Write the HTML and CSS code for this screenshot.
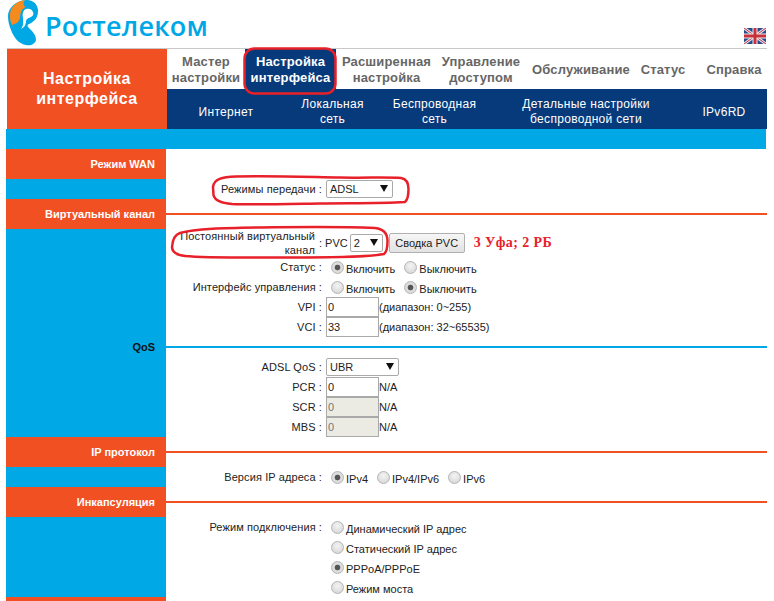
FILE: index.html
```html
<!DOCTYPE html>
<html lang="ru">
<head>
  <meta charset="UTF-8" />
  <title>Настройка интерфейса</title>
  <link rel="stylesheet" href="styles.css">
</head>
<body>
  <header class="top">
    <div class="logo">
      <svg class="logo-mark" width="30" height="46" viewBox="0 0 30 46">
        <path d="M19 0C26 0 30 5 30 11C30 18 26 22 21 24C19 25 19 26 21 28C25 32 28 35 28 40C27 44 23 46 18 45C11 44 6 38 3 30C1 25 0 21 0 16C0 8 8 0 19 0Z" fill="#00a7e5"/>
        <path d="M17 0C8 1 1 8 2 17C2 20 3 23 4 25C8 24 11 22 12 18C12 13 14 8 18 7C15 6 15 2 17 0Z" fill="#f58a1f"/>
        <path d="M25 12C24 9 21 8 18 9C15 10 14 14 15 18C15 22 16 25 13 29C17 27 18 24 18 21C19 18 21 18 23 17C25 16 26 14 25 12Z" fill="#fff"/>
      </svg>
      <span class="logo-text">Ростелеком</span>
    </div>
    <svg class="flag" width="22" height="16" viewBox="0 0 22 16">
      <rect width="22" height="16" fill="#2a4a8c"/>
      <path d="M0 0L22 16M22 0L0 16" stroke="#e4e4ec" stroke-width="3"/>
      <path d="M0 0L22 16M22 0L0 16" stroke="#c8303a" stroke-width="1"/>
      <path d="M11 0V16M0 8H22" stroke="#eeeef2" stroke-width="5"/>
      <path d="M11 0V16M0 8H22" stroke="#c8303a" stroke-width="3"/>
    </svg>
  </header>

  <div class="nav-wrap">
    <div class="page-title">Настройка<br>интерфейса</div>
    <nav class="nav">
      <div class="menu">
        <a class="m1">Мастер<br>настройки</a>
        <a class="m2 active">Настройка<br>интерфейса</a>
        <a class="m3">Расширенная<br>настройка</a>
        <a class="m4">Управление<br>доступом</a>
        <a class="m5">Обслуживание</a>
        <a class="m6">Статус</a>
        <a class="m7">Справка</a>
      </div>
      <div class="submenu">
        <a class="s1">Интернет</a>
        <a class="s2">Локальная<br>сеть</a>
        <a class="s3">Беспроводная<br>сеть</a>
        <a class="s4">Детальные настройки<br>беспроводной сети</a>
        <a class="s5">IPv6RD</a>
      </div>
    </nav>
  </div>

  <div class="band"></div>

  <main class="layout">
    <!-- Режим WAN -->
    <section class="sec sec-wan">
      <div class="side"><h3>Режим WAN</h3></div>
      <div class="body">
        <div class="row">
          <label>Режимы передачи :</label>
          <div class="val"><span class="select w67">ADSL</span></div>
        </div>
      </div>
    </section>

    <!-- Виртуальный канал -->
    <section class="sec sec-pvc">
      <div class="side"><h3>Виртуальный канал</h3></div>
      <div class="body">
        <div class="row row-pvc">
          <label>Постоянный виртуальный<br>канал</label>
          <div class="val"><span class="colon">: PVC</span><span class="select w33">2</span><button class="btn">Сводка PVC</button><b class="note">3 Уфа; 2 РБ</b></div>
        </div>
        <div class="row">
          <label>Статус :</label>
          <div class="val"><span class="radio on"></span><span class="opt o1">Включить</span><span class="radio"></span><span class="opt">Выключить</span></div>
        </div>
        <div class="row">
          <label>Интерфейс управления :</label>
          <div class="val"><span class="radio"></span><span class="opt o1">Включить</span><span class="radio on"></span><span class="opt">Выключить</span></div>
        </div>
        <div class="row">
          <label>VPI :</label>
          <div class="val"><span class="field">0</span><span>(диапазон: 0~255)</span></div>
        </div>
        <div class="row">
          <label>VCI :</label>
          <div class="val"><span class="field">33</span><span>(диапазон: 32~65535)</span></div>
        </div>
      </div>
    </section>

    <!-- QoS -->
    <section class="sec sec-qos">
      <div class="side side-blue"><h3>QoS</h3></div>
      <div class="body">
        <div class="row">
          <label>ADSL QoS :</label>
          <div class="val"><span class="select w73">UBR</span></div>
        </div>
        <div class="row">
          <label>PCR :</label>
          <div class="val"><span class="field">0</span><span>N/A</span></div>
        </div>
        <div class="row">
          <label>SCR :</label>
          <div class="val"><span class="field off">0</span><span>N/A</span></div>
        </div>
        <div class="row">
          <label>MBS :</label>
          <div class="val"><span class="field off">0</span><span>N/A</span></div>
        </div>
      </div>
    </section>

    <!-- IP протокол -->
    <section class="sec sec-ip">
      <div class="side"><h3>IP протокол</h3></div>
      <div class="body">
        <div class="row">
          <label>Версия IP адреса :</label>
          <div class="val"><span class="radio on"></span><span class="opt o1">IPv4</span><span class="radio"></span><span class="opt o1">IPv4/IPv6</span><span class="radio"></span><span class="opt">IPv6</span></div>
        </div>
      </div>
    </section>

    <!-- Инкапсуляция -->
    <section class="sec sec-enc">
      <div class="side"><h3>Инкапсуляция</h3></div>
      <div class="body">
        <div class="row">
          <label>Режим подключения :</label>
          <div class="val"><span class="radio"></span><span class="opt">Динамический IP адрес</span></div>
        </div>
        <div class="row">
          <label></label>
          <div class="val"><span class="radio"></span><span class="opt">Статический IP адрес</span></div>
        </div>
        <div class="row">
          <label></label>
          <div class="val"><span class="radio on"></span><span class="opt">PPPoA/PPPoE</span></div>
        </div>
        <div class="row">
          <label></label>
          <div class="val"><span class="radio"></span><span class="opt">Режим моста</span></div>
        </div>
      </div>
    </section>
    <div class="last"></div>
  </main>

  <!-- Red hand-drawn marks on top of the screenshot -->
  <svg class="marks" width="774" height="601" viewBox="0 0 774 601">
    <rect x="244.5" y="48.5" width="91" height="45" rx="10" />
    <path d="M213 187C214 179 222 177 236 176.500C270 175.500 310 177 340 177.500C365 178 390 177 401 178C407 179 408.500 183 408.500 189C408.500 196 407.500 200 405 202C380 203.500 350 203 320 203.500C290 204 250 205 232 204C220 203 214.500 200 213.500 195Z" />
    <path d="M172 247C172.500 240 174 235 180 233C195 228.500 225 228 260 227.500C300 227 350 227 375 228C384 229 387.500 234 387.500 241C387.500 248 387 252 384 254C370 257 330 257.500 290 257.500C250 257.500 205 258 185 256C176 255 172 252 172 247Z" />
  </svg>
</body>
</html>
```

FILE: styles.css
```css
/* General */
html, body {
  margin: 0;
  padding: 0;
  background: #fff;
}

body {
  position: relative;
  width: 774px;
  height: 601px;
  overflow: hidden;
  font-family: "Liberation Sans", Arial, sans-serif;
  font-size: 11px;
  color: #222;
}

/* Header */
.top {
  display: flex;
  justify-content: space-between;
  align-items: flex-end;
  width: 760px;
  height: 48px;
  margin-left: 7px;
  border-bottom: 1px solid #c8c8c8;
}

.logo {
  display: flex;
  align-items: flex-end;
}

.logo-mark {
  margin: 0 0 2px 1px;
}

.logo-text {
  margin: 0 0 7px 7px;
  font-family: "Open Sans", sans-serif;
  font-size: 27px;
  line-height: 30px;
  letter-spacing: 0.2px;
  font-weight: 600;
  color: #00a7e5;
}

.flag {
  margin: 0 1px 4px 0;
}

/* Navigation */
.nav-wrap {
  display: flex;
  width: 760px;
  margin-left: 7px;
  height: 80px;
}

.page-title {
  width: 160px;
  padding-top: 20px;
  box-sizing: border-box;
  background: #f15023;
  color: #fff;
  text-align: center;
  font-size: 16px;
  line-height: 20px;
  letter-spacing: 0.5px;
  font-weight: bold;
}

.nav {
  flex: 1;
  min-width: 0;
}

.menu {
  display: flex;
  height: 40px;
  font-size: 13px;
  line-height: 16px;
  font-weight: bold;
  letter-spacing: 0.15px;
  color: #666;
  text-align: center;
}

.menu a {
  display: flex;
  align-items: center;
  justify-content: center;
  flex: none;
  box-sizing: border-box;
  padding-top: 1px;
}

.menu .active {
  background: #073a7a;
  color: #fff;
}

.m1 { width: 78px; }
.m2 { width: 91px; }
.m3 { width: 101px; }
.m4 { width: 88px; }
.m5 { width: 112px; }
.m6 { width: 52px; }
.m7 { width: 90px; }

.submenu {
  display: flex;
  height: 40px;
  background: #073a7a;
  color: #fff;
  font-size: 12px;
  line-height: 15px;
  letter-spacing: 0.3px;
  text-align: center;
}

.submenu a {
  display: flex;
  align-items: center;
  justify-content: center;
  flex: none;
  box-sizing: border-box;
  padding-top: 6px;
}

.s1 { width: 118px; }
.s2 { width: 95px; }
.s3 { width: 109px; }
.s4 { width: 194px; }
.s5 { width: 82px; }

.band {
  width: 760px;
  height: 20px;
  margin-left: 6px;
  background: #00a9e6;
}

/* Settings sections */
.layout {
  width: 761px;
  margin-left: 6px;
}

.sec {
  display: flex;
}

.side {
  width: 160px;
  flex: none;
  background: linear-gradient(#f15023 30px, #00a9e6 30px);
}

.side h3 {
  margin: 0;
  padding: 8px 11px 0 0;
  text-align: right;
  font-size: 11px;
  line-height: 14px;
  color: #fff;
}

.side-blue {
  background: #00a9e6;
}

.side-blue h3 {
  padding-top: 7px;
  color: #111;
}

.body {
  flex: 1;
  padding-top: 30px;
  background: linear-gradient(#f15023, #f15023) 0 14px / 100% 2px no-repeat;
}

.sec-wan .body {
  background: none;
}

.sec-qos .body {
  padding-top: 24px;
  background: linear-gradient(#00a9e6, #00a9e6) 0 13px / 100% 2px no-repeat;
}

.sec-wan { height: 50px; }
.sec-pvc { height: 134px; }
.sec-qos { height: 104px; }
.sec-ip { height: 50px; }
.sec-enc { height: 110px; }

.last {
  height: 4px;
  width: 160px;
  background: #f15023;
}

.row {
  display: flex;
  height: 20px;
  align-items: center;
}

.row label {
  width: 156px;
  flex: none;
  text-align: right;
  line-height: 14px;
  letter-spacing: 0.1px;
}

.val {
  display: flex;
  align-items: center;
  margin-left: 4px;
}

.row-pvc {
  height: 28px;
}

.row-pvc label {
  width: 149px;
}

.colon {
  margin-right: 2px;
}

/* Controls */
.select {
  position: relative;
  display: block;
  box-sizing: border-box;
  height: 18px;
  line-height: 16px;
  padding-left: 3px;
  background: #fff;
  border: 1px solid #a9a9a9;
  border-radius: 2px;
}

.select::after {
  content: "";
  position: absolute;
  right: 4px;
  top: 4px;
  border-left: 4px solid transparent;
  border-right: 4px solid transparent;
  border-top: 7px solid #111;
}

.w67 { width: 67px; }
.w33 { width: 33px; }
.w73 { width: 73px; }

.btn {
  height: 20px;
  width: 76px;
  margin-left: 6px;
  padding: 0;
  font: inherit;
  color: #222;
  background: linear-gradient(#f6f6f6, #e2e2e2);
  border: 1px solid #b0b0b0;
  border-radius: 2px;
}

.note {
  margin-left: 9px;
  font-family: "Liberation Serif", serif;
  font-size: 14px;
  color: #e8202a;
  letter-spacing: 0.4px;
}

.field {
  display: block;
  box-sizing: border-box;
  width: 53px;
  height: 20px;
  line-height: 18px;
  padding-left: 1px;
  background: #fff;
  border: 1px solid #a9a9a9;
}

.field.off {
  background: #ebebe4;
  color: #777;
}

.radio {
  display: block;
  box-sizing: border-box;
  width: 13px;
  height: 13px;
  margin: 0 2px 0 5px;
  flex: none;
  border: 1px solid #b4b4b4;
  border-radius: 50%;
  background: radial-gradient(circle at 50% 35%, #f4f4f4, #d2d2d2);
}

.radio.on {
  background: radial-gradient(circle, #555 0, #555 2.5px, #dcdcdc 3.2px);
}

.opt {
  padding-top: 4px;
}

.o1 { margin-right: 4px; }

/* Overlay */
.marks {
  position: absolute;
  left: 0;
  top: 0;
  pointer-events: none;
}

.marks rect,
.marks path {
  fill: none;
  stroke: #e8202a;
  stroke-width: 2.5;
}
```
